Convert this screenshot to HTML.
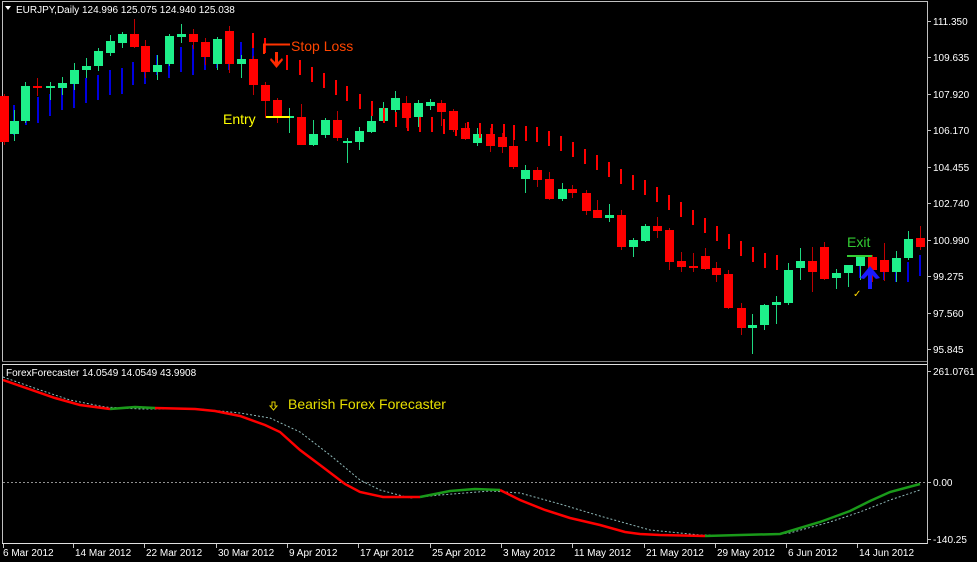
<!DOCTYPE html>
<html><head><meta charset="utf-8"><style>
html,body{margin:0;padding:0;background:#000;width:977px;height:562px;overflow:hidden}
svg{display:block}
text{font-family:"Liberation Sans",sans-serif}
</style></head><body>
<svg id="s" width="977" height="562" xmlns="http://www.w3.org/2000/svg">
<rect width="977" height="562" fill="#000"/>
<g id="g"></g>
</svg>
<script>
const g=document.getElementById('g');let h='';
function L(x1,y1,x2,y2,c,w,extra){h+=`<line x1="${x1}" y1="${y1}" x2="${x2}" y2="${y2}" stroke="${c}" stroke-width="${w||1}" ${extra||''}/>`;}
function R(x,y,w,hh,c){h+=`<rect x="${x}" y="${y}" width="${w}" height="${hh}" fill="${c}"/>`;}
function T(x,y,s,c,fs,a){h+=`<text x="${x}" y="${y}" fill="${c}" font-size="${fs||10}" ${a||''}>${s}</text>`;}
// borders
L(2.5,1,2.5,361,'#c0c0c0');L(2,1.5,927,1.5,'#c0c0c0');L(927.5,1,927.5,544,'#c0c0c0');
L(2,361.5,927,361.5,'#808080');L(2,364.5,927,364.5,'#e0e0e0');L(2.5,364,2.5,544,'#c0c0c0');L(2,543.5,927,543.5,'#e0e0e0');
// title
h+=`<path d="M5,6 L11,6 L8,10 Z" fill="#fff"/>`;
T(16,13,'EURJPY,Daily  124.996 125.075 124.940 125.038','#fff',10);
// price axis
[['111.350',21],['109.635',57],['107.920',94],['106.170',130],['104.455',167],['102.740',203],['100.990',240],['99.275',276],['97.560',313],['95.845',349]].forEach(p=>{L(927,p[1]+0.5,931,p[1]+0.5,'#c0c0c0');T(933,p[1]+4,p[0],'#fff',10);});
// blue lines
const blue=[[14,105,135],[26,106,125],[38,97,123],[50,94,116],[62,88,110],[74,80,108],[86,78,103],[98,75,100],[110,70,95],[122,68,94],[133,62,85],[145,60,84],[157,55,75],[169,57,78],[181,47,72],[193,45,75],[205,45,70],[217,42,68],[229,40,70],[241,42,62],[253,42,60],[896,265,282],[908,262,282],[920,255,276],[884,265,280],[860,262,278]];
blue.forEach(b=>{R(b[0]-1,b[1],2,b[2]-b[1],'#0000e0');});
// candles [x,top,bottom,color,hi,lo]
const c=[[4,96,142,'r',94,145],[14,121,134,'g',110,141],[25,86,121,'g',82,123],[37,86,88,'r',78,96],[50,86,88,'g',82,100],[62,83,88,'g',77,95],[74,70,84,'g',63,90],[86,66,70,'g',58,78],[98,51,66,'g',48,71],[110,41,53,'g',35,56],[122,34,43,'g',32,48],[134,34,47,'r',19,48],[145,46,72,'r',40,78],[157,65,72,'g',55,80],[169,36,64,'g',34,66],[181,34,37,'g',24,43],[193,34,42,'r',29,49],[205,42,57,'r',38,65],[217,39,64,'g',37,70],[229,31,64,'r',26,73],[241,59,64,'g',55,78],[253,59,85,'r',56,95],[265,85,101,'r',82,118],[277,100,117,'r',98,123],[289,116,118,'g',108,133],[301,117,145,'r',104,145],[313,134,145,'g',120,146],[325,120,135,'g',118,138],[337,120,138,'r',111,141],[347,141,143,'g',138,163],[359,131,142,'g',127,150],[371,121,132,'g',115,133],[383,108,121,'g',102,123],[395,98,110,'g',91,114],[406,103,118,'r',96,128],[418,103,117,'g',100,127],[430,102,106,'g',99,110],[441,103,112,'r',100,126],[453,111,130,'r',109,132],[465,128,139,'r',123,140],[477,134,143,'g',128,146],[490,134,146,'r',128,152],[502,137,147,'r',133,153],[513,146,167,'r',140,169],[525,170,179,'g',165,193],[537,170,180,'r',167,187],[549,179,199,'r',172,200],[562,189,199,'g',183,201],[572,189,193,'r',185,198],[586,193,211,'r',190,215],[597,210,218,'r',200,218],[609,215,218,'g',204,222],[621,215,247,'r',210,250],[633,240,247,'g',238,257],[645,226,241,'g',224,242],[657,226,231,'r',217,238],[669,230,262,'r',228,270],[681,261,267,'r',252,272],[693,266,268,'r',253,272],[705,256,269,'r',248,270],[716,268,275,'r',262,282],[728,274,308,'r',270,309],[741,308,328,'r',303,335],[752,325,328,'g',314,354],[764,305,325,'g',304,330],[776,302,305,'g',296,324],[788,270,303,'g',263,305],[800,261,268,'g',248,280],[812,261,272,'r',247,292],[824,247,279,'r',242,280],[836,273,278,'g',269,289],[848,265,273,'g',265,287],[860,257,266,'g',259,280],[872,257,270,'r',255,282],[884,260,272,'r',243,281],[896,258,272,'g',251,282],[908,239,258,'g',231,260],[920,238,247,'r',226,250]];
c.forEach(k=>{const col=k[3]=='r'?'#ff0000':'#1ef08a';const wc=k[3]=='r'?'#c00000':'#1ed880';L(k[0]+0.5,k[4],k[0]+0.5,k[5],wc,1);let hh=Math.max(2,k[2]-k[1]);R(k[0]-4,k[1],9,hh,col);});
// red trailing segments
const pts=[[253,40],[265,45],[287,62],[300,67],[312,74],[324,80],[336,87],[347,93],[360,101],[372,108],[384,115],[396,119],[408,123],[420,124],[432,124],[444,126],[456,128],[468,129],[480,130],[492,131],[504,131],[514,132],[526,133],[537,134],[549,138],[561,143],[573,149],[585,156],[597,162],[609,169],[621,176],[633,182],[645,187],[657,194],[669,202],[681,209],[693,217],[705,225],[717,233],[729,241],[741,248],[753,254],[765,260],[777,262]];
pts.forEach(p=>{R(p[0]-1,p[1]-7,2,15,'#ff0000');});
// Stop loss
L(263,44.5,290,44.5,'#ff3300',2);L(264,44,264,54,'#ff3300',2);
h+=`<path d="M275,52 L278,52 L278,62 L282,58 L283,60 L276.5,68 L270,60 L271,58 L275,62 Z" fill="#ff2a00"/>`;
T(291,51,'Stop Loss','#ff4500',14);
// entry
T(223,124,'Entry','#ffff00',14);L(266,117,290,117,'#ffff00',2);
// exit
T(847,247,'Exit','#33cc33',14);L(847,256,872,256,'#33cc33',2);
h+=`<path d="M870,266 L880,278 L876,279 L872,275 L872,289 L868,289 L868,275 L864,279 L860,278 Z" fill="#1a1aff"/>`;
T(853,297,'✓','#ffd700',10);
// lower panel
T(6,376,'ForexForecaster 14.0549 14.0549 43.9908','#fff',10);
L(3,482.5,927,482.5,'#909090',1,'stroke-dasharray="2,2"');
T(933,375,'261.0761','#fff',10);T(933,486,'0.00','#fff',10);T(933,543,'-140.25','#fff',10);
L(927,371.5,931,371.5,'#c0c0c0');L(927,482.5,931,482.5,'#c0c0c0');L(927,539.5,931,539.5,'#c0c0c0');
const sig=[[3,377],[40,390],[70,400],[105,407],[140,409],[200,409],[240,413],[270,418],[300,432],[330,455],[360,480],[380,490],[410,498],[440,495],[490,491],[520,493],[560,504],[600,516],[650,530],[700,535],[760,535],[790,533],[830,522],[860,512],[890,500],[920,490]];
h+=`<polyline points="${sig.map(p=>p.join(',')).join(' ')}" fill="none" stroke="#8fb8b8" stroke-width="1" stroke-dasharray="2,2"/>`;
function PL(a,col){h+=`<polyline points="${a.map(p=>p.join(',')).join(' ')}" fill="none" stroke="${col}" stroke-width="2.5"/>`;}
PL([[3,380],[55,398],[80,405],[110,409]],'#ff0000');
PL([[110,409],[135,407],[155,408]],'#1a9a1a');
PL([[155,408],[195,409],[215,411],[240,416],[265,425],[280,432],[300,450],[320,465],[345,484],[360,492],[383,497],[420,497]],'#ff0000');
PL([[420,497],[450,491],[475,489],[500,490]],'#1a9a1a');
PL([[500,490],[520,500],[545,510],[570,518],[600,525],[625,532],[640,534],[660,535],[705,536]],'#ff0000');
PL([[705,536],[740,535],[780,534],[790,531],[820,522],[850,511],[870,501],[890,492],[920,484]],'#1a9a1a');
h+=`<path d="M272,402 L275,402 L275,406 L277,406 L273.5,410 L270,406 L272,406 Z" fill="none" stroke="#e0d000" stroke-width="1"/>`;
T(288,409,'Bearish Forex Forecaster','#e8e000',14);
// dates
[['6 Mar 2012',3],['14 Mar 2012',73],['22 Mar 2012',144],['30 Mar 2012',216],['9 Apr 2012',287],['17 Apr 2012',358],['25 Apr 2012',430],['3 May 2012',501],['11 May 2012',572],['21 May 2012',644],['29 May 2012',715],['6 Jun 2012',786],['14 Jun 2012',857]].forEach(d=>{L(d[1]+0.5,544,d[1]+0.5,548,'#c0c0c0');T(d[1]+(d[1]==3?0:2),556,d[0],'#fff',10);});
g.innerHTML=h;
</script>
</body></html>
